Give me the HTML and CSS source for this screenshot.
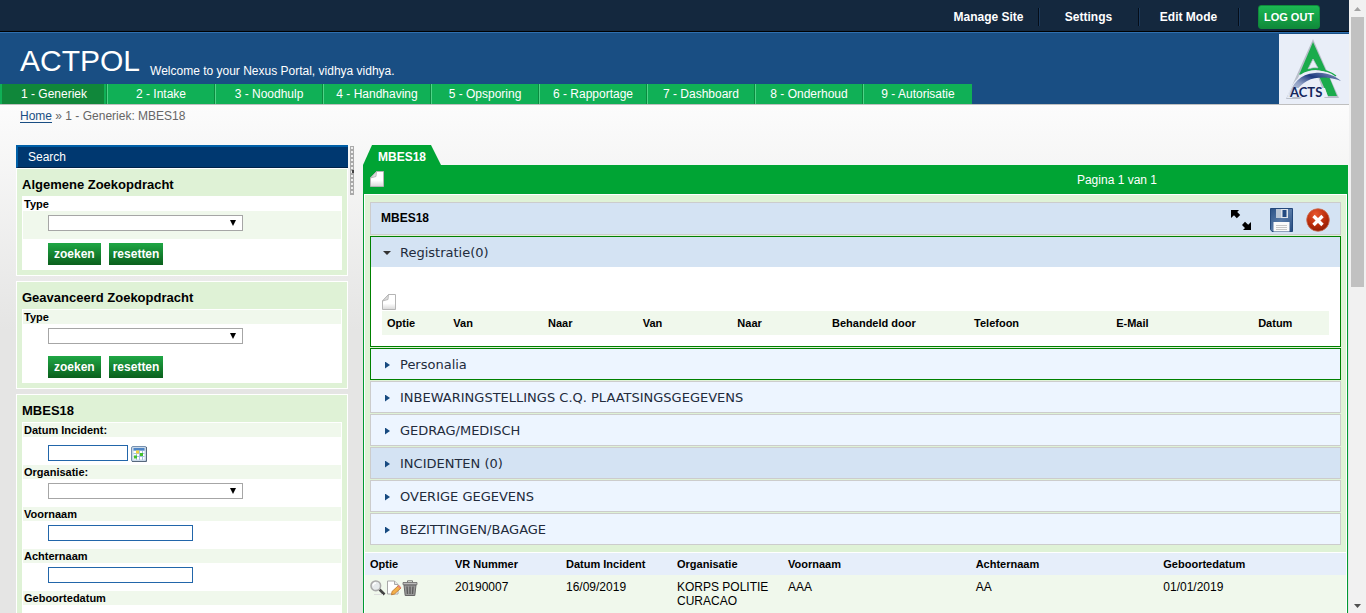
FILE: index.html
```html
<!DOCTYPE html>
<html lang="nl">
<head>
<meta charset="utf-8">
<title>ACTPOL - MBES18</title>
<link rel="stylesheet" href="styles.css">
</head>
<body>
<svg class="defs" aria-hidden="true">
  <defs>
    <linearGradient id="paper" x1="0" y1="0" x2="0" y2="1"><stop offset="0" stop-color="#fff"/><stop offset=".6" stop-color="#fff"/><stop offset="1" stop-color="#d8d8d8"/></linearGradient>
    <linearGradient id="swoosh" x1="0" y1="1" x2="1" y2="0"><stop offset="0" stop-color="#e3e7f0"/><stop offset=".4" stop-color="#8d9dc2"/><stop offset=".65" stop-color="#1d3a80"/><stop offset="1" stop-color="#8fa0bf"/></linearGradient>
    <linearGradient id="disk" x1="0" y1="0" x2="1" y2="1"><stop offset="0" stop-color="#2c5286"/><stop offset=".5" stop-color="#5679a6"/><stop offset="1" stop-color="#244a80"/></linearGradient>
    <radialGradient id="stop" cx=".4" cy=".25" r=".8"><stop offset="0" stop-color="#e8562e"/><stop offset=".6" stop-color="#b92c0a"/><stop offset="1" stop-color="#8c1c04"/></radialGradient>
    <symbol id="doc" viewBox="0 0 14 16"><path d="M6.500.500h7v15H.500V7z" fill="url(#paper)" stroke="#b5b5b5"/><path d="M.500 7 6.500.500 6 5.500z" fill="#ddd" stroke="#b0b0b0" stroke-width=".8"/></symbol>
  </defs>
</svg>
<div class="window">
  <div class="page">
    <header>
      <nav class="topbar">
        <a href="#">Manage Site</a>
        <a href="#">Settings</a>
        <a href="#">Edit Mode</a>
        <button class="logout" type="button">LOG OUT</button>
      </nav>
      <div class="banner">
        <div class="banner-main">
          <div class="brand"><h1>ACTPOL</h1><p>Welcome to your Nexus Portal, vidhya vidhya.</p></div>
          <nav class="tabs">
            <a class="current" href="#">1 - Generiek</a>
            <a href="#">2 - Intake</a>
            <a href="#">3 - Noodhulp</a>
            <a href="#">4 - Handhaving</a>
            <a href="#">5 - Opsporing</a>
            <a href="#">6 - Rapportage</a>
            <a href="#">7 - Dashboard</a>
            <a href="#">8 - Onderhoud</a>
            <a href="#">9 - Autorisatie</a>
          </nav>
        </div>
        <svg class="logo" viewBox="0 0 70 70" role="img" aria-label="ACTS">
          <path d="M34 5 7 65h14l13-12 12 11h14L48 37z" fill="#b9bfca"/>
          <path d="M34 9 20 42 11 62h35L38 40z" fill="#e9eef8"/>
          <path d="M34 8 20 41c5-4 10-5 18-6L48 39z" fill="#1bab4c"/>
          <path d="M39 40h10l9 22h-9z" fill="#1bab4c"/>
          <path d="m34 25-5 10q6-2 10-1z" fill="#e9eef8" stroke="#b9bfcb" stroke-width=".8"/>
          <path d="M8 64C12 50 20 38 36 37 48 36 57 41 63 48 52 42 38 40 28 46 19 51 17 58 13 64z" fill="#e9eef8"/>
          <path d="M9 63C13 50 21 40 36 39 48 38 56 42 62 47 52 43 38 42 28 47 19 52 17 58 13 63z" fill="url(#swoosh)"/>
          <path d="M21 40C32 33 46 34 57 42" fill="none" stroke="#1bab4c" stroke-width="1.500"/>
          <path d="M16 54h30l3 9H12z" fill="#e9eef8"/>
          <text x="11" y="63">ACTS</text>
        </svg>
      </div>
    </header>

    <div class="crumbs"><a href="#">Home</a> » 1 - Generiek: MBES18</div>

    <div class="columns">
      <aside>
        <h2 class="search-title">Search</h2>
        <form class="panel">
          <h3>Algemene Zoekopdracht</h3>
          <div class="box">
            <label class="name" for="t1">Type</label>
            <div class="field tint"><span class="pick"><select id="t1"><option></option></select></span></div>
            <div class="actions"><button type="button">zoeken</button><button type="button">resetten</button></div>
          </div>
        </form>
        <form class="panel">
          <h3>Geavanceerd Zoekopdracht</h3>
          <div class="box">
            <label class="name tint" for="t2">Type</label>
            <div class="field"><span class="pick"><select id="t2"><option></option></select></span></div>
            <div class="actions"><button type="button">zoeken</button><button type="button">resetten</button></div>
          </div>
        </form>
        <form class="panel">
          <h3>MBES18</h3>
          <div class="box">
            <label class="name tint" for="d1">Datum Incident:</label>
            <div class="field date"><input id="d1" type="text">
              <button class="icon" type="button" aria-label="Kalender"><svg width="16" height="16" viewBox="0 0 16 16"><rect x=".5" y=".5" width="15" height="15" rx="1.500" fill="#c9d8e8" stroke="#7691b0"/><path d="M1 15.500h14.500V1" fill="none" stroke="#56687c"/><path d="M2.500 2h11v2.500h-11z" fill="#4f86c6"/><path d="M2.500 5h11v8.500h-11z" fill="#fff"/><path d="M2.500 7.500h11M2.500 10.500h11M5.500 5v9M8.500 5v9M11.500 5v9" stroke="#a5c0df"/><path d="M5 4.500h3v3H5z" fill="#f2d33c"/><path d="M9 7h3v3H9zM3 9.500h3v3H3z" fill="#43c02c"/></svg></button></div>
            <label class="name tint" for="o1">Organisatie:</label>
            <div class="field"><span class="pick"><select id="o1"><option></option></select></span></div>
            <label class="name tint" for="v1">Voornaam</label>
            <div class="field"><input id="v1" type="text"></div>
            <label class="name tint" for="a1">Achternaam</label>
            <div class="field"><input id="a1" type="text"></div>
            <label class="name tint" for="g1">Geboortedatum</label>
            <div class="field date"><input id="g1" type="text"></div>
          </div>
        </form>
      </aside>

      <div class="splitter"></div>

      <main>
        <h2 class="tab">MBES18</h2>
        <div class="bar">
          <button class="icon" type="button" aria-label="Nieuw"><svg width="14" height="16"><use href="#doc"/></svg></button>
          <span>Pagina 1 van 1</span>
        </div>
        <div class="work">
          <div class="sections">
            <div class="record">
              <h3>MBES18</h3>
              <button class="icon" type="button" aria-label="Vergroten"><svg width="22" height="22" viewBox="0 0 22 22"><path d="M1 1h8L7.200 3l3 3-3.400 3.200L4 6.200 1 9zM21 21h-8l2-2-3-3 3-3.200 3.200 3L21 13z" fill="#000"/></svg></button>
              <button class="icon save" type="button" aria-label="Opslaan"><svg width="24" height="24" viewBox="0 0 24 24"><path d="M.5.5h22v23H2l-1.500-2z" fill="url(#disk)" stroke="#24497c"/><path d="M6 1h12v9H6z" fill="#dfe5ec"/><path d="M6 1h5v9H6z" fill="#b9c6d6"/><path d="M12.500 2h4v7h-4z" fill="#234a80"/><path d="M3.500 14h16v9.500h-16z" fill="#fafafa"/><path d="M6 17.500h11M6 19.500h11M6 21.500h11" stroke="#c5c5c5"/></svg></button>
              <button class="icon" type="button" aria-label="Sluiten"><svg width="24" height="24" viewBox="0 0 24 24"><circle cx="12" cy="12" r="11.300" fill="url(#stop)" stroke="#c96a4e" stroke-width=".8"/><path d="m7.500 8 9 9m0-9-9 9" stroke="#fff" stroke-width="3.400"/></svg></button>
            </div>
            <section class="section open">
              <button class="fold" type="button">Registratie(0)</button>
              <div class="body">
                <button class="icon" type="button" aria-label="Nieuwe registratie"><svg width="14" height="16"><use href="#doc"/></svg></button>
                <table>
                  <colgroup><col class="w7"><col class="w10"><col class="w10"><col class="w10"><col class="w10"><col class="w15"><col class="w15"><col class="w15"><col class="w8"></colgroup>
                  <thead><tr><th>Optie</th><th>Van</th><th>Naar</th><th>Van</th><th>Naar</th><th>Behandeld door</th><th>Telefoon</th><th>E-Mail</th><th>Datum</th></tr></thead>
                </table>
              </div>
            </section>
            <section class="section green"><button class="fold" type="button">Personalia</button></section>
            <section class="section"><button class="fold" type="button">INBEWARINGSTELLINGS C.Q. PLAATSINGSGEGEVENS</button></section>
            <section class="section"><button class="fold" type="button">GEDRAG/MEDISCH</button></section>
            <section class="section marked"><button class="fold" type="button">INCIDENTEN (0)</button></section>
            <section class="section"><button class="fold" type="button">OVERIGE GEGEVENS</button></section>
            <section class="section"><button class="fold" type="button">BEZITTINGEN/BAGAGE</button></section>
          </div>
          <table class="results">
            <colgroup><col class="r1"><col class="r2"><col class="r2"><col class="r2"><col class="r3"><col class="r3"><col class="r3"></colgroup>
            <thead><tr><th>Optie</th><th>VR Nummer</th><th>Datum Incident</th><th>Organisatie</th><th>Voornaam</th><th>Achternaam</th><th>Geboortedatum</th></tr></thead>
            <tbody><tr>
              <td><div class="tools">
                <button class="icon" type="button" aria-label="Bekijken"><svg width="16" height="16" viewBox="0 0 16 16"><path d="m9.500 9.500 5 5" stroke="#444" stroke-width="2.600"/><path d="M4 14.500h9" stroke="#ddd"/><circle cx="5.800" cy="5.800" r="4.800" fill="#e6eaec" stroke="#aaa" stroke-width="1.600"/><path d="M3 5.500q.500-2.500 3-2.500" stroke="#fff" fill="none" stroke-width="1.300"/></svg></button>
                <button class="icon" type="button" aria-label="Bewerken"><svg width="16" height="16" viewBox="0 0 16 16"><path d="M1.500 1h7L12 4.500V14H1.500z" fill="#fff" stroke="#a8a8a8"/><path d="M8.500 1v3.500H12" fill="#e4e4e4" stroke="#a8a8a8"/><path d="m6 11.500 6.500-6 2.500 2.500-6.500 6-3 .800z" fill="#f3b04a" stroke="#b8702c" stroke-width=".8"/><path d="m11.500 6.300 1.500-1.300 2.300 2.500-1.300 1.300z" fill="#e58378"/></svg></button>
                <button class="icon" type="button" aria-label="Verwijderen"><svg width="16" height="16" viewBox="0 0 16 16"><path d="M2 5h12l-1.200 10.500H3.200z" fill="#9a9a9a" stroke="#666"/><path d="M5 6.500 5.500 14M8 6.500V14M11 6.500 10.500 14" stroke="#5c5c5c" stroke-width="1.400"/><path d="M1 2.500h14v2.200H1z" fill="#bbb" stroke="#666" stroke-width=".8"/><path d="M5.500 2.300V.800h5v1.500" fill="none" stroke="#777"/></svg></button>
              </div></td>
              <td>20190007</td><td>16/09/2019</td><td>KORPS POLITIE CURACAO</td><td>AAA</td><td>AA</td><td>01/01/2019</td>
            </tr></tbody>
          </table>
        </div>
      </main>
    </div>
  </div>
  <div class="scroll"><i class="up"></i><div class="thumb"></div><i class="down"></i></div>
</div>
</body>
</html>
```

FILE: styles.css
```css
* { box-sizing: border-box; }
body {
  margin: 0;
  font: 12px/14px "Liberation Sans", Arial, sans-serif;
  color: #000;
}
h1, h2, h3, p { margin: 0; }
button, input, select { font: inherit; margin: 0; padding: 0; }
svg { display: block; }
.defs { position: absolute; width: 0; height: 0; }
.icon { border: 0; background: none; display: block; }

.window { display: flex; height: 100vh; overflow: hidden; }
.page {
  flex: 1;
  min-width: 0;
  overflow: hidden;
  background: linear-gradient(#fcfcfc 104px, #e5e5e4 330px);
}

.topbar {
  display: flex;
  justify-content: flex-end;
  align-items: center;
  height: 32px;
  padding: 2px 29px 0 0;
  background: #14283e;
  border-bottom: 1px solid #000;
}
.topbar a {
  width: 100px;
  padding: 2px 0;
  border-right: 1px solid #050d18;
  box-shadow: 1px 0 #1c3a5c;
  color: #fff;
  font-weight: bold;
  text-align: center;
  text-decoration: none;
}
.logout {
  width: 62px;
  height: 24px;
  margin-left: 19px;
  border: 1px solid #0f8a3b;
  border-radius: 3px;
  background: linear-gradient(#1bb853, #108a3a);
  color: #fff;
  font-size: 11px;
  font-weight: bold;
}

.banner {
  display: flex;
  align-items: flex-end;
  background: #194e83;
  border-top: 1px solid #2f6fae;
  border-bottom: 1px solid #bfbfbf;
}
.banner-main { flex: 1; }
.logo { width: 70px; height: 70px; margin-top: 1px; background: #e9eef8; }
.logo text { font: bold 13px Lato, sans-serif; fill: #14265c; }
.brand {
  display: flex;
  align-items: flex-end;
  gap: 10px;
  padding: 0 20px 6px;
  color: #fff;
}
.brand h1 { font-size: 30px; line-height: 34px; font-weight: normal; }
.tabs { display: flex; }
.tabs a {
  width: 108px;
  height: 20px;
  line-height: 20px;
  border-left: 1px solid #4fd487;
  border-right: 1px solid #0b8a40;
  background: #10b056;
  color: #fff;
  text-align: center;
  text-decoration: none;
}
.tabs .current {
  width: 107px;
  border-left: 2px solid #10b056;
  box-shadow: inset -2px 0 #10b056;
  background: #10873a;
}
.tabs a:last-child { width: 109px; border-right: 0; }

.crumbs { padding: 4px 20px 22px; color: #666; }
.crumbs a { color: #194e83; text-underline-offset: 2px; }

.columns {
  display: grid;
  grid-template-columns: 332px 4px 1fr;
  padding: 0 1px 0 16px;
}
.splitter {
  height: 49px;
  margin-top: 1px;
  margin-left: 2px;
  width: 4px;
  background: linear-gradient(#444, #444) 2px 24px / 2px 3px no-repeat, radial-gradient(#eee 1px, #aaa 1px) 0 0 / 4px 4px;
}
main { margin-left: 11px; }

.search-title {
  height: 23px;
  padding-left: 10px;
  border: solid #0060a8;
  border-width: 2px 0 0 2px;
  border-bottom: 1px solid #002347;
  background: #003870;
  color: #fff;
  font-size: 12px;
  font-weight: normal;
  line-height: 20px;
}
.panel {
  margin-bottom: 5px;
  padding: 8px 5px 5px;
  border: 1px solid #fff;
  background: #dff2d6;
}
.panel h3 { font-size: 13px; line-height: 16px; padding-bottom: 3px; }
.box { padding: 1px; background: #fff; }
.name {
  display: block;
  padding-left: 1px;
  font-size: 11px;
  font-weight: bold;
  line-height: 14px;
}
.tint { background: #f0f8ec; }
.field { display: flex; height: 28px; padding: 4px 0 0 25px; }
.field input { width: 145px; height: 16px; border: 1px solid #2266aa; background: #fff; }
.field.date { padding-top: 8px; gap: 3px; }
.field.date input { width: 80px; }
.date .icon { height: 16px; margin-top: 1px; }
.pick { display: grid; width: 195px; height: 16px; }
.pick select {
  grid-area: 1 / 1;
  appearance: none;
  border: 1px solid #a6a6a6;
  border-radius: 0;
  background: #fff;
}
.pick::after {
  content: "";
  grid-area: 1 / 1;
  justify-self: end;
  align-self: center;
  width: 6px;
  height: 6px;
  margin-right: 7px;
  background: #000;
  clip-path: polygon(0 0, 100% 0, 50% 100%);
  pointer-events: none;
}
.actions { display: flex; gap: 8px; padding: 4px 0 4px 25px; }
.actions button {
  height: 22px;
  padding: 0 6px;
  border: 0;
  background: linear-gradient(#1fa745, #0a5f1c);
  color: #fff;
  font-weight: bold;
}
.actions button + button { padding: 0 4px; }

.tab {
  width: 78px;
  height: 20px;
  padding-top: 5px;
  background: #00a434;
  clip-path: polygon(0 100%, 9px 0, 68px 0, 100% 100%);
  color: #fff;
  font-size: 12px;
  line-height: 14px;
  text-align: center;
}
.bar {
  display: flex;
  align-items: flex-start;
  justify-content: space-between;
  height: 29px;
  padding: 6px 191px 0 7px;
  background: #00a434;
  color: #fff;
}
.bar span { padding-top: 2px; }
.work { border: solid #009a32; border-width: 0 1px; padding: 1px 1px 0; background: #fff; }
.sections { padding: 7px 5px 6px; background: #dff2d6; }
.record {
  display: flex;
  align-items: center;
  height: 33px;
  margin-bottom: 1px;
  padding: 2px 10px 0;
  border: 1px solid #ccc;
  background: #d4e3f3;
}
.record h3 { flex: 1; font-size: 12px; padding-bottom: 4px; }
.save { margin: 0 12px 0 18px; }
.section { margin-bottom: 1px; border: 1px solid #ccc; background: #edf5ff; }
.fold {
  display: flex;
  align-items: center;
  gap: 10px;
  width: 100%;
  height: 30px;
  padding: 2px 0 0 14px;
  border: 0;
  background: none;
  color: #222b3c;
  font: 13px/16px "DejaVu Sans", Verdana, sans-serif;
  text-align: left;
}
.fold::before {
  content: "";
  width: 5px;
  height: 7px;
  background: #174a80;
  clip-path: polygon(0 0, 100% 50%, 0 100%);
}
.open, .green { border-color: #008000; }
.open { background: #fff; }
.open .fold, .marked { background: #d4e3f3; }
.open .fold { padding-left: 12px; gap: 9px; }
.open .fold::before { width: 8px; height: 4px; background: #333; clip-path: polygon(0 0, 100% 0, 50% 100%); }
.body { padding: 27px 11px 11px; }

table { width: 100%; border-collapse: collapse; table-layout: fixed; }
th { font-size: 11px; text-align: left; padding: 5px; line-height: 14px; }
td { padding: 5px; vertical-align: top; }
.body table { margin-top: 1px; background: #f0f8ec; }
.w7 { width: 7%; }
.w8 { width: 8%; }
.w10 { width: 10%; }
.w15 { width: 15%; }
.results { margin-top: 1px; background: #f0f8ec; }
.results thead { background: #e6eefa; }
.results th { padding: 4px 5px; }
.results tbody { height: 70px; }
.r1 { width: 85px; }
.r2 { width: 111px; }
.tools { display: flex; }

.scroll {
  display: flex;
  flex-direction: column;
  align-items: center;
  flex: 0 0 17px;
  padding: 7px 0 5px;
  background: #f1f1f1;
}
.scroll i { width: 7px; height: 4px; background: #a3a3a3; clip-path: polygon(50% 0, 100% 100%, 0 100%); }
.scroll .down { margin-top: auto; background: #505050; clip-path: polygon(0 0, 100% 0, 50% 100%); }
.thumb { width: 13px; height: 45%; margin-top: 6px; background: #c1c1c1; }
```
